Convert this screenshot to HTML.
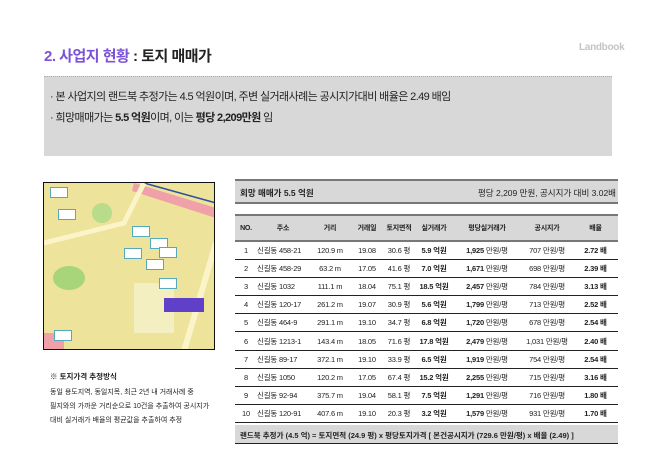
<!DOCTYPE html>
<html><head><meta charset="utf-8"><style>
*{margin:0;padding:0;box-sizing:border-box}
body{width:661px;height:460px;background:#fff;font-family:"Liberation Sans","Noto Sans CJK KR",sans-serif;position:relative;overflow:hidden;color:#222}
.a{position:absolute;white-space:nowrap}
.title{left:44px;top:45px;font-size:15px;font-weight:bold;color:#222;letter-spacing:-0.5px}
.title span{color:#7b52d8}
.logo{left:579px;top:42px;font-size:10px;color:#c4c4c4;font-weight:bold;letter-spacing:-0.3px}
.box{left:44px;top:76px;width:568px;height:80px;background:#d8d8d8;border-top:1px dotted #aaa}
.box p{position:absolute;left:6px;font-size:11px;color:#222;letter-spacing:-0.6px}
.map{left:43px;top:182px;width:172px;height:168px;border:1.5px solid #111;background:#efe7a0;overflow:hidden}
.note{left:50px;font-size:7px;color:#222}
table{position:absolute;left:235px;top:214px;width:383px;border-collapse:collapse;font-size:7.5px;letter-spacing:-0.2px}
td{height:18.2px;border-bottom:1px solid #222;text-align:center;padding:0}
tr.h td{height:26px;background:#d8d8d8;font-weight:bold;border-top:2px solid #777;border-bottom:2px solid #777;font-size:7px}
.b{font-weight:bold}
.hd{left:235px;top:179px;width:383px;height:25px;background:#d8d8d8;border-top:2px solid #777;border-bottom:2px solid #777}
.ft{left:235px;top:425px;width:383px;height:19px;background:#d8d8d8;border-bottom:1px solid #222;font-size:7.5px;font-weight:bold;padding:5px 0 0 5px}
.lb{position:absolute;width:18px;height:11px;background:#fff;border:1px solid #5ab}
</style></head><body>
<div class="a title"><span>2. 사업지 현황</span> : 토지 매매가</div>
<div class="a logo">Landbook</div>
<div class="a box">
<p style="top:11px">· 본 사업지의 랜드북 추정가는 4.5 억원이며, 주변 실거래사례는 공시지가대비 배율은 2.49 배임</p>
<p style="top:32px">· 희망매매가는 <b>5.5 억원</b>이며, 이는 <b>평당 2,209만원</b> 임</p>
</div>
<div class="a map">
<svg width="172" height="168" style="position:absolute;left:0;top:0">
<rect width="172" height="168" fill="#ede39a"/>
<path d="M90 0 L172 25 L172 35 L88 8 Z" fill="#f0a0a8"/>
<path d="M100 0 L172 20" stroke="#3050a0" stroke-width="1.5" fill="none"/>
<path d="M0 60 L80 40 L100 0" stroke="#fbf4c8" stroke-width="5" fill="none"/>
<path d="M140 168 L172 60" stroke="#fbf4c8" stroke-width="6" fill="none"/>
<ellipse cx="25" cy="95" rx="16" ry="12" fill="#a8d47a"/>
<ellipse cx="58" cy="30" rx="10" ry="10" fill="#b8dc8a"/>
<rect x="90" y="100" width="40" height="50" fill="#f4efc0"/>
<rect x="0" y="150" width="20" height="18" fill="#f0a0a8"/>
<rect x="120" y="115" width="40" height="14" fill="#6040c8"/>
</svg>
<div class="lb" style="left:6px;top:4px"></div>
<div class="lb" style="left:14px;top:26px"></div>
<div class="lb" style="left:88px;top:43px"></div>
<div class="lb" style="left:106px;top:55px"></div>
<div class="lb" style="left:115px;top:64px"></div>
<div class="lb" style="left:80px;top:65px"></div>
<div class="lb" style="left:102px;top:76px"></div>
<div class="lb" style="left:115px;top:95px"></div>
<div class="lb" style="left:10px;top:147px"></div>
</div>
<div class="a note b" style="top:371px;font-size:7.5px">※ 토지가격 추정방식</div>
<div class="a note" style="top:387px">동일 용도지역, 동일지목, 최근 2년 내 거래사례 중</div>
<div class="a note" style="top:401px">필지와의 가까운 거리순으로 10건을 추출하여 공시지가</div>
<div class="a note" style="top:415px">대비 실거래가 배율의 평균값을 추출하여 추정</div>
<div class="a hd"><span class="a b" style="left:5px;top:6px;font-size:8.5px">회망 매매가 5.5 억원</span><span class="a" style="right:2px;top:6px;font-size:8.5px">평당 2,209 만원, 공시지가 대비 3.02배</span></div>
<table>
<colgroup><col style="width:22px"><col style="width:52px"><col style="width:42px"><col style="width:32px"><col style="width:32px"><col style="width:38px"><col style="width:68px"><col style="width:52px"><col style="width:45px"></colgroup>
<tr class="h"><td>NO.</td><td>주소</td><td>거리</td><td>거래일</td><td>토지면적</td><td>실거래가</td><td>평당실거래가</td><td>공시지가</td><td>배율</td></tr>
<tr><td>1</td><td style="text-align:left">신길동 458-21</td><td>120.9 m</td><td>19.08</td><td>30.6 평</td><td class="b">5.9 억원</td><td><b>1,925</b> 만원/평</td><td>707 만원/평</td><td class="b">2.72 배</td></tr>
<tr><td>2</td><td style="text-align:left">신길동 458-29</td><td>63.2 m</td><td>17.05</td><td>41.6 평</td><td class="b">7.0 억원</td><td><b>1,671</b> 만원/평</td><td>698 만원/평</td><td class="b">2.39 배</td></tr>
<tr><td>3</td><td style="text-align:left">신길동 1032</td><td>111.1 m</td><td>18.04</td><td>75.1 평</td><td class="b">18.5 억원</td><td><b>2,457</b> 만원/평</td><td>784 만원/평</td><td class="b">3.13 배</td></tr>
<tr><td>4</td><td style="text-align:left">신길동 120-17</td><td>261.2 m</td><td>19.07</td><td>30.9 평</td><td class="b">5.6 억원</td><td><b>1,799</b> 만원/평</td><td>713 만원/평</td><td class="b">2.52 배</td></tr>
<tr><td>5</td><td style="text-align:left">신길동 464-9</td><td>291.1 m</td><td>19.10</td><td>34.7 평</td><td class="b">6.8 억원</td><td><b>1,720</b> 만원/평</td><td>678 만원/평</td><td class="b">2.54 배</td></tr>
<tr><td>6</td><td style="text-align:left">신길동 1213-1</td><td>143.4 m</td><td>18.05</td><td>71.6 평</td><td class="b">17.8 억원</td><td><b>2,479</b> 만원/평</td><td>1,031 만원/평</td><td class="b">2.40 배</td></tr>
<tr><td>7</td><td style="text-align:left">신길동 89-17</td><td>372.1 m</td><td>19.10</td><td>33.9 평</td><td class="b">6.5 억원</td><td><b>1,919</b> 만원/평</td><td>754 만원/평</td><td class="b">2.54 배</td></tr>
<tr><td>8</td><td style="text-align:left">신길동 1050</td><td>120.2 m</td><td>17.05</td><td>67.4 평</td><td class="b">15.2 억원</td><td><b>2,255</b> 만원/평</td><td>715 만원/평</td><td class="b">3.16 배</td></tr>
<tr><td>9</td><td style="text-align:left">신길동 92-94</td><td>375.7 m</td><td>19.04</td><td>58.1 평</td><td class="b">7.5 억원</td><td><b>1,291</b> 만원/평</td><td>716 만원/평</td><td class="b">1.80 배</td></tr>
<tr><td>10</td><td style="text-align:left">신길동 120-91</td><td>407.6 m</td><td>19.10</td><td>20.3 평</td><td class="b">3.2 억원</td><td><b>1,579</b> 만원/평</td><td>931 만원/평</td><td class="b">1.70 배</td></tr>
</table>
<div class="a ft">랜드북 추정가 (4.5 억) = 토지면적 (24.9 평) x 평당토지가격 [ 본건공시지가 (729.6 만원/평) x 배율 (2.49) ]</div>
</body></html>
